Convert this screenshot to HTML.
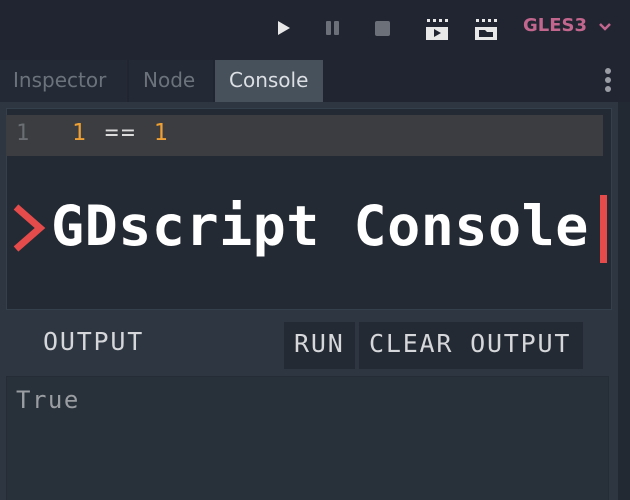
<!DOCTYPE html>
<html><head><style>
html,body{margin:0;width:630px;height:500px;overflow:hidden}
body{background:#202531;position:relative;font-family:"DejaVu Sans","Liberation Sans",sans-serif}
.a{position:absolute}
.mono{font-family:"DejaVu Sans Mono","Liberation Mono",monospace}
</style></head><body>
<svg class="a" style="left:270px;top:14px" width="360" height="30">
<path d="M8 7 L20 14 L8 21 Z" fill="#e8e8e8"/>
<rect x="56" y="7" width="5" height="14" rx="1" fill="#6c7078"/><rect x="64" y="7" width="5" height="14" rx="1" fill="#6c7078"/>
<rect x="105" y="7" width="15" height="15" rx="2" fill="#6c7078"/>
<g fill="#e8e8e8"><rect x="156" y="13" width="22" height="13"/><rect x="157" y="5" width="3" height="3"/><rect x="163" y="5" width="3" height="3"/><rect x="169" y="5" width="3" height="3"/><rect x="175" y="5" width="3" height="3"/></g>
<path d="M164 15 L171 19 L164 23Z" fill="#202531"/>
<g fill="#e8e8e8"><rect x="205" y="13" width="22" height="13"/><rect x="206" y="5" width="3" height="3"/><rect x="212" y="5" width="3" height="3"/><rect x="218" y="5" width="3" height="3"/><rect x="224" y="5" width="3" height="3"/></g>
<path d="M209 16 h6 l2 2 h6 v5 h-14z" fill="#202531"/>
<path d="M330 10 L335 15 L340 10" stroke="#c2668e" stroke-width="2.5" fill="none"/>
</svg>
<div class="a" style="left:523px;top:15px;font-size:18px;font-weight:bold;color:#c2668e">GLES3</div>
<div class="a" style="left:0;top:60px;width:127px;height:42px;background:#242a35"></div>
<div class="a" style="left:129px;top:60px;width:84px;height:42px;background:#242a35"></div>
<div class="a" style="left:215px;top:60px;width:108px;height:42px;background:#47515c"></div>
<div class="a" style="left:13px;top:68px;font-size:20px;color:#6c727b">Inspector</div>
<div class="a" style="left:143px;top:68px;font-size:20px;color:#6c727b">Node</div>
<div class="a" style="left:229px;top:68px;font-size:20px;color:#dcdfe3">Console</div>
<div class="a" style="left:605px;top:68px;width:6px;height:6px;border-radius:3px;background:#9a9ea4;box-shadow:0 9px 0 #9a9ea4,0 18px 0 #9a9ea4"></div>
<div class="a" style="left:0;top:102px;width:618px;height:398px;background:#2d3641"></div>
<div class="a" style="left:618px;top:102px;width:12px;height:398px;background:#232933"></div>
<div class="a" style="left:6px;top:108px;width:606px;height:202px;background:#232a33;border:1px solid #34404b;box-sizing:border-box"></div>
<div class="a" style="left:6px;top:115px;width:597px;height:41px;background:#3b3d40"></div>
<div class="a mono" style="left:16px;top:121px;font-size:22px;color:#6b6e72">1</div>
<div class="a mono" style="left:72px;top:120px;font-size:23px;letter-spacing:2.5px;color:#eea035;white-space:pre">1 <span style="color:#dcdcdc">==</span> 1</div>
<svg class="a" style="left:10px;top:203px" width="36" height="50"><path d="M6 4 L30 25 L6 46" stroke="#e54b4b" stroke-width="7" fill="none"/></svg>
<div class="a mono" style="left:51px;top:194px;font-size:55px;font-weight:bold;letter-spacing:0.5px;color:#fff;white-space:pre">GDscript Console</div>
<div class="a" style="left:600px;top:195px;width:7px;height:68px;background:#e54b4b"></div>
<div class="a mono" style="left:43px;top:327px;font-size:25px;letter-spacing:1.8px;color:#d5d7da">OUTPUT</div>
<div class="a" style="left:284px;top:322px;width:71px;height:47px;background:#242a33"></div>
<div class="a" style="left:359px;top:322px;width:224px;height:47px;background:#242a33"></div>
<div class="a mono" style="left:294px;top:329px;font-size:25px;letter-spacing:1.8px;color:#d5d7da">RUN</div>
<div class="a mono" style="left:369px;top:329px;font-size:25px;letter-spacing:1.8px;color:#d5d7da;white-space:pre">CLEAR OUTPUT</div>
<div class="a" style="left:6px;top:376px;width:603px;height:124px;background:#28303a;border:1px solid #252c35;border-bottom:none;box-sizing:border-box"></div>
<div class="a mono" style="left:16px;top:386px;font-size:24px;letter-spacing:1.5px;color:#9a9ea2">True</div>
</body></html>
